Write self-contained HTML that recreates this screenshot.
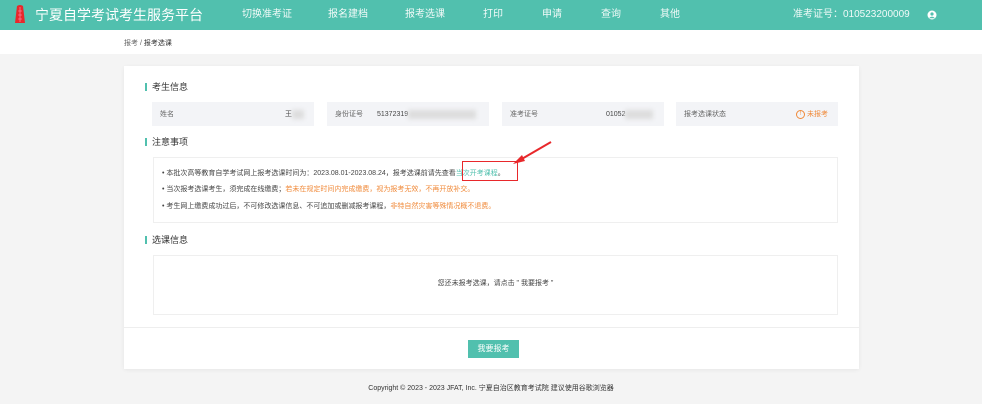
<!DOCTYPE html>
<html><head><meta charset="utf-8"><style>
*{margin:0;padding:0;box-sizing:border-box}
body{width:982px;height:404px;background:#f4f4f4;font-family:"Liberation Sans","Noto Sans CJK SC",sans-serif;position:relative;overflow:hidden;color:#333}
.hd{position:absolute;left:0;top:0;width:982px;height:30px;background:#51c0ae;color:#fff}
.hd span{position:absolute;top:8px;font-size:10px;line-height:14px;opacity:.92}
.crumb{position:absolute;left:0;top:30px;width:982px;height:24px;background:#fff;font-size:7px;color:#666}
.card{position:absolute;left:124px;top:66px;width:735px;height:303px;background:#fff;box-shadow:0 1px 4px rgba(0,0,0,.06)}
.t{position:absolute;font-size:9px;color:#333;padding-left:7px;line-height:12px}
.t:before{content:"";position:absolute;left:0;top:2px;width:2px;height:8px;background:#51c0ae}
.ib{position:absolute;top:36px;height:24px;width:162px;background:#f3f4f7;font-size:7px;color:#666;line-height:26px}
.ib .l{position:absolute;left:8px}.ib .v{position:absolute;color:#444;white-space:nowrap}
.box{position:absolute;border:1px solid #efefef;background:#fff}
.n{position:absolute;left:8px;font-size:7px;color:#444;white-space:nowrap}
.o{color:#f08a3a}.g{color:#51c0ae}
.blur{display:inline-block;background:#ddd;filter:blur(2px);height:9px;vertical-align:middle}
</style></head><body>
<div class="hd">
<svg style="position:absolute;left:14px;top:4px" width="12" height="20" viewBox="0 0 12 20"><path d="M3 2 Q6 0 9 2 L11 19 L1 19 Z" fill="#e8282b"/><path d="M6 3v15M4 7h4M4 11h4M4 15h4" stroke="#f9b" stroke-width=".6"/></svg>
<span style="left:35px;top:6px;font-size:14px;line-height:18px;opacity:1">宁夏自学考试考生服务平台</span>
<span style="left:242px">切换准考证</span><span style="left:328px">报名建档</span><span style="left:405px">报考选课</span><span style="left:483px">打印</span><span style="left:542px">申请</span><span style="left:601px">查询</span><span style="left:660px">其他</span>
<span style="left:793px">准考证号：010523200009</span>
<svg style="position:absolute;left:927px;top:10px" width="10" height="10" viewBox="0 0 10 10"><circle cx="5" cy="5" r="4.5" fill="#fff"/><circle cx="5" cy="4" r="1.6" fill="#51c0ae"/><path d="M2 8.3Q5 5 8 8.3" fill="#51c0ae"/></svg>
</div>
<div class="crumb"><span style="position:absolute;left:124px;top:8px">报考 / <span style="color:#333">报考选课</span></span></div>
<div class="card">
<div class="t" style="left:21px;top:15px">考生信息</div>
<div class="ib" style="left:28px"><span class="l">姓名</span><span class="v" style="left:133px">王<span class="blur" style="width:12px"></span></span></div>
<div class="ib" style="left:203px"><span class="l">身份证号</span><span class="v" style="left:50px">51372319<span class="blur" style="width:68px"></span></span></div>
<div class="ib" style="left:378px"><span class="l">准考证号</span><span class="v" style="left:104px">01052<span class="blur" style="width:28px"></span></span></div>
<div class="ib" style="left:552px"><span class="l">报考选课状态</span><span class="v" style="right:10px;color:#f08a3a"><span style="display:inline-block;width:9px;height:9px;border:1px solid #f08a3a;border-radius:50%;font-size:6px;line-height:7px;text-align:center;vertical-align:middle">!</span> 未报考</span></div>
<div class="t" style="left:21px;top:70px">注意事项</div>
<div class="box" style="left:29px;top:91px;width:685px;height:66px">
<div class="n" style="top:10px">• 本批次高等教育自学考试网上报考选课时间为：2023.08.01-2023.08.24，报考选课前请先查看<span class="g">当次开考课程</span>。</div>
<div class="n" style="top:26px">• 当次报考选课考生，须完成在线缴费；<span class="o">若未在规定时间内完成缴费，视为报考无效，不再开放补交。</span></div>
<div class="n" style="top:43px">• 考生网上缴费成功过后，不可修改选课信息、不可追加或删减报考课程，<span class="o">非特自然灾害等殊情况概不退费。</span></div>
</div>
<div class="t" style="left:21px;top:168px">选课信息</div>
<div class="box" style="left:29px;top:189px;width:685px;height:60px"><div style="position:absolute;top:22px;width:100%;text-align:center;font-size:7px;color:#444">您还未报考选课，请点击 " 我要报考 "</div></div>
<div style="position:absolute;left:0;top:261px;width:735px;height:1px;background:#eee"></div>
<div style="position:absolute;left:344px;top:274px;width:51px;height:18px;background:#51c0ae;color:#fff;font-size:8px;line-height:18px;text-align:center">我要报考</div>
</div>
<div style="position:absolute;left:0;top:383px;width:982px;text-align:center;font-size:7px;color:#333">Copyright © 2023 - 2023 JFAT, Inc. 宁夏自治区教育考试院 建议使用谷歌浏览器</div>
<div style="position:absolute;left:462px;top:161px;width:56px;height:20px;border:1.5px solid #e8282b"></div>
<svg style="position:absolute;left:0;top:0" width="982" height="404"><path d="M551 142 L520 160" stroke="#e8282b" stroke-width="2"/><path d="M513 164 L522 155 L525 161Z" fill="#e8282b"/></svg>
</body></html>
